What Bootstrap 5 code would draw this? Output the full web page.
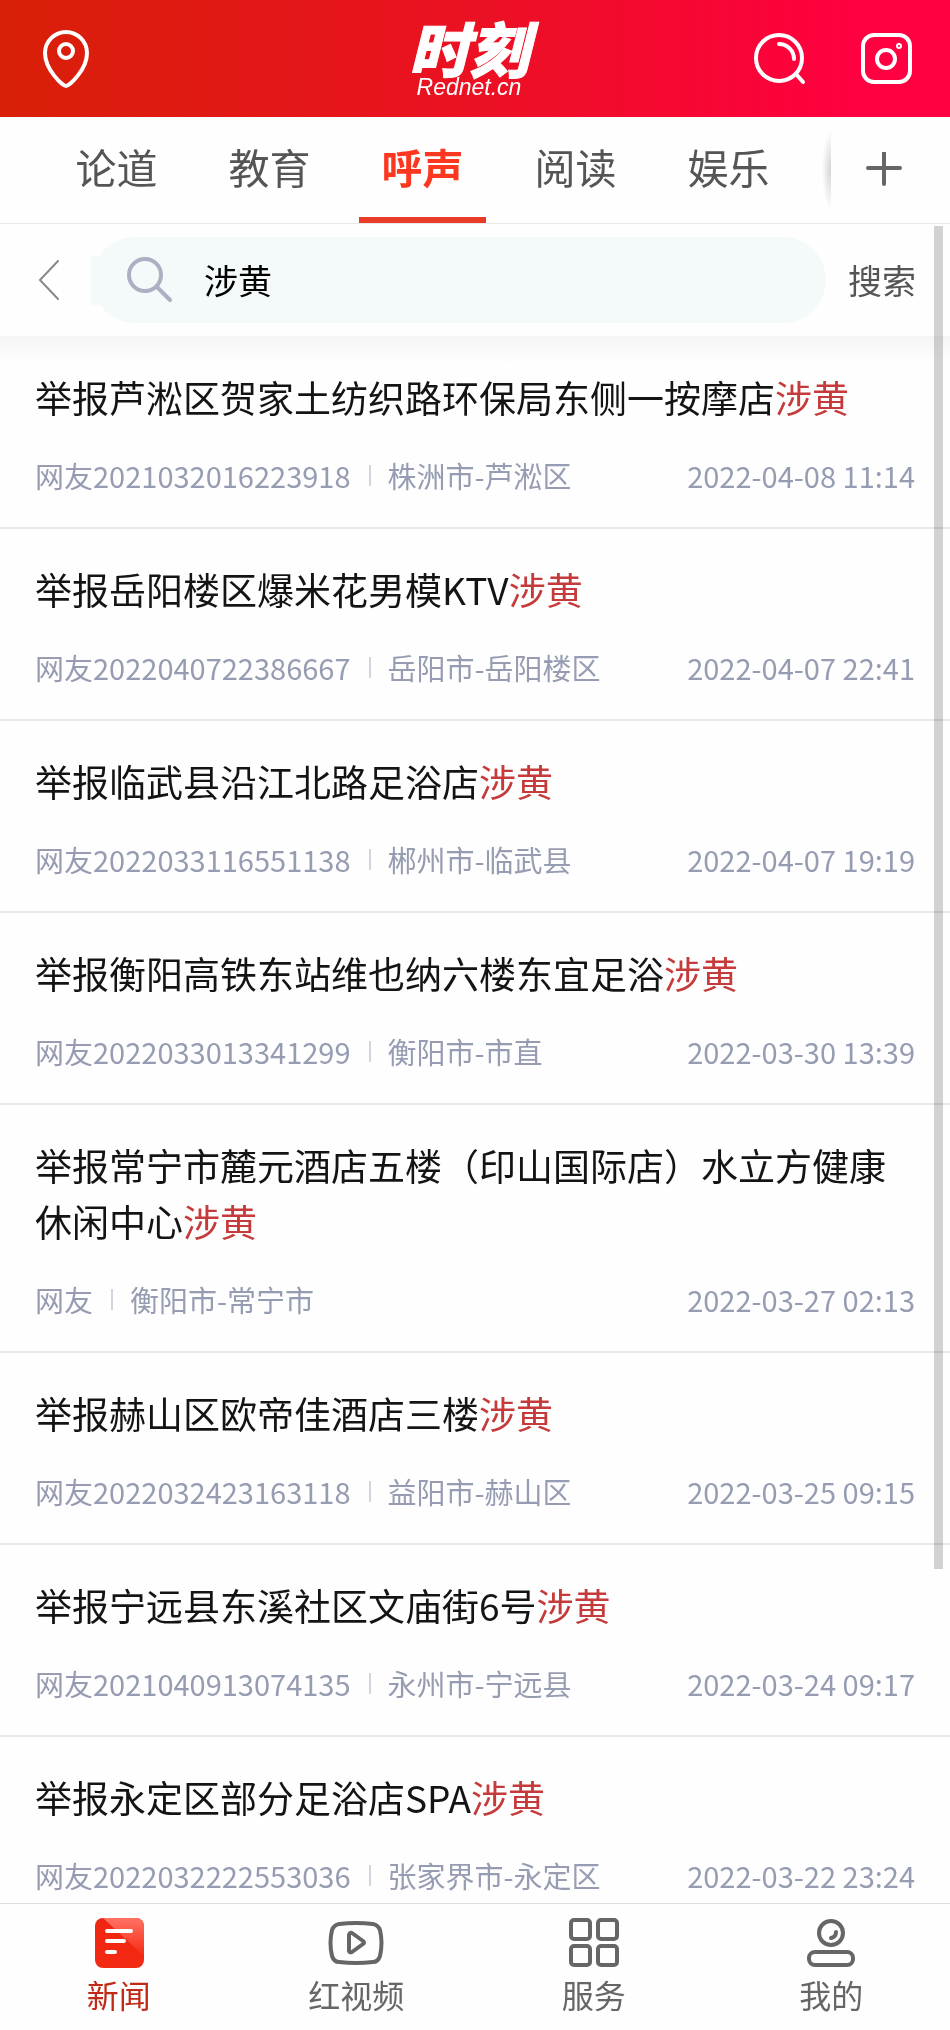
<!DOCTYPE html>
<html lang="zh-CN">
<head>
<meta charset="utf-8">
<meta name="viewport" content="width=device-width, initial-scale=1">
<title>时刻 - 呼声</title>
<link href="https://cdn.jsdelivr.net/npm/bootstrap@5.3.0/dist/css/bootstrap.min.css" rel="stylesheet">
<style>
  body { font-family: "Noto Sans CJK SC", sans-serif; background: #fefefe; color: #141414; }
  a { text-decoration: none; color: inherit; }
  button { background: none; border: 0; padding: 0; }
  svg { display: block; fill: none; stroke-linecap: round; stroke-linejoin: round; }

  .app-header { display: grid; grid-template-columns: 1fr auto 1fr; height: 117px; padding: 0 37px; background: linear-gradient(90deg, #d82008, #ec1024 52%, #ff0040 90%); color: #fff; }
  .app-header svg { stroke: #fff; stroke-width: 4; }
  .header-tools { gap: 52px; }
  .brand { margin-right: 12px; }
  .brand-name { font-size: 60px; line-height: 56px; font-weight: 900; font-style: italic; -webkit-text-stroke: 1px #fff; }
  .brand-site { font-family: "Liberation Sans", sans-serif; font-size: 23px; line-height: 24px; font-style: italic; }

  .channels { height: 107px; border-bottom: 1px solid #e9e9e9; }
  .channels nav { padding: 0 26px 0 40px; }
  .channel { flex: 1 1 0; margin: 0 13px; padding-top: 18px; font-size: 41px; line-height: 62px; text-align: center; white-space: nowrap; color: #555; border-bottom: 6px solid transparent; }
  .channel.active { color: #fb3720; font-weight: 700; border-color: #e83c28; }
  .channel-more { width: 119px; padding-right: 13px; position: relative; }
  .channel-more::before { content: ""; position: absolute; right: 100%; top: 12px; bottom: 12px; width: 10px; background: radial-gradient(ellipse 9px 40px at 100% 50%, #d4d4d4, transparent); }

  .search-row { height: 112px; padding: 0 34px 0 38px; }
  .search-pill { height: 86px; margin: 0 22px 0 33px; padding-left: 35px; background: #f4f9fa; position: relative; }
  .search-pill::before { content: ""; position: absolute; left: -1px; top: 19px; width: 12px; height: 49px; background: #f4f9fa; }
  .search-pill input { min-width: 0; font-size: 34px; line-height: 52px; margin-left: 31px; padding: 0; border: 0; outline: 0; background: transparent; color: #000; }
  .search-go { font-size: 34px; line-height: 52px; color: #555; }

  .results { min-height: 0; padding-top: 1px; }
  .results::before { content: ""; position: absolute; left: 0; right: 0; top: 0; height: 28px; background: linear-gradient(#f5f5f5, #fefefe00); }
  .result { padding: 32px 35px 30px; border-bottom: 2px solid #e8e8e8; }
  .result h2 { margin: 0 0 28px; font-size: 37px; line-height: 56px; font-weight: 400; }
  .result em { font-style: normal; color: #c53a3a; }
  .result-meta { font-size: 29px; line-height: 44px; color: #969db2; white-space: nowrap; }
  .bar-sep { width: 2px; height: 21px; margin: 0 17px 0 18px; background: #d3d5de; }
  .scroll-thumb { position: absolute; z-index: 2; right: 7px; top: 2px; width: 9px; height: 80%; background: #d3d3d3; mix-blend-mode: multiply; }

  .tabbar { height: 127px; border-top: 1px solid #dedede; background: #fefefe; position: relative; z-index: 3; }
  .tabbar a { flex: 1 1 0; padding-top: 12px; font-size: 32px; line-height: 48px; text-align: center; color: #666; }
  .tabbar a.active { color: #c02a17; }
  .tabbar svg { margin: 0 auto; stroke: #666; stroke-width: 4; }
</style>
</head>
<body>
<div class="d-flex flex-column vh-100 overflow-hidden">

  <header class="app-header align-items-center flex-shrink-0">
    <button type="button" aria-label="定位">
      <svg width="58" height="62" viewBox="0 0 58 62"><path d="M29 58C26 58 8 42 8 25a21 21 0 0 1 42 0C50 42 32 58 29 58Z"/><circle cx="29" cy="23" r="7"/></svg>
    </button>
    <a href="#" class="brand text-center">
      <div class="brand-name">时刻</div>
      <div class="brand-site">Rednet.cn</div>
    </a>
    <div class="header-tools d-flex justify-content-end">
      <button type="button" aria-label="搜索新闻">
        <svg width="56" height="56" viewBox="0 0 56 56"><circle cx="28" cy="27" r="23"/><path d="M28 13a15 15 0 0 1 15 15M45 43l7 8"/></svg>
      </button>
      <button type="button" aria-label="拍摄">
        <svg width="54" height="56" viewBox="0 0 54 56"><rect x="4" y="4" width="47" height="47" rx="11"/><circle cx="27" cy="28" r="9"/><circle cx="40" cy="15" r="1"/></svg>
      </button>
    </div>
  </header>

  <div class="channels d-flex flex-shrink-0">
    <nav class="d-flex flex-grow-1" aria-label="频道">
      <a class="channel" href="#">论道</a>
      <a class="channel" href="#">教育</a>
      <a class="channel active" href="#" aria-current="page">呼声</a>
      <a class="channel" href="#">阅读</a>
      <a class="channel" href="#">娱乐</a>
    </nav>
    <button type="button" class="channel-more d-flex align-items-center justify-content-center" aria-label="更多频道">
      <svg width="36" height="36" viewBox="0 0 36 36" stroke="#666" stroke-width="4"><path d="M2 16h32M18 0v32"/></svg>
    </button>
  </div>

  <main class="d-flex flex-column flex-grow-1 position-relative overflow-hidden">
    <form class="search-row d-flex align-items-center flex-shrink-0" role="search">
      <button type="button" aria-label="返回">
        <svg width="21" height="42" viewBox="0 0 21 42" stroke="#8a8a8a" stroke-width="2"><path d="M20 2 2 21l18 19"/></svg>
      </button>
      <div class="search-pill d-flex align-items-center flex-grow-1 rounded-pill">
        <svg width="46" height="46" viewBox="0 0 46 46" stroke="#adb0c2" stroke-width="4"><circle cx="18" cy="18" r="16"/><path d="m30 30 13 13"/></svg>
        <input type="text" class="flex-grow-1" value="涉黄" aria-label="搜索内容">
      </div>
      <button type="submit" class="search-go">搜索</button>
    </form>

    <ul class="results list-unstyled mb-0 flex-grow-1 position-relative overflow-hidden">
      <li class="result">
        <h2><a href="#">举报芦淞区贺家土纺织路环保局东侧一按摩店<em>涉黄</em></a></h2>
        <div class="result-meta d-flex align-items-center"><span>网友2021032016223918</span><i class="bar-sep"></i><span>株洲市-芦淞区</span><time class="ms-auto">2022-04-08 11:14</time></div>
      </li>
      <li class="result">
        <h2><a href="#">举报岳阳楼区爆米花男模KTV<em>涉黄</em></a></h2>
        <div class="result-meta d-flex align-items-center"><span>网友2022040722386667</span><i class="bar-sep"></i><span>岳阳市-岳阳楼区</span><time class="ms-auto">2022-04-07 22:41</time></div>
      </li>
      <li class="result">
        <h2><a href="#">举报临武县沿江北路足浴店<em>涉黄</em></a></h2>
        <div class="result-meta d-flex align-items-center"><span>网友2022033116551138</span><i class="bar-sep"></i><span>郴州市-临武县</span><time class="ms-auto">2022-04-07 19:19</time></div>
      </li>
      <li class="result">
        <h2><a href="#">举报衡阳高铁东站维也纳六楼东宜足浴<em>涉黄</em></a></h2>
        <div class="result-meta d-flex align-items-center"><span>网友2022033013341299</span><i class="bar-sep"></i><span>衡阳市-市直</span><time class="ms-auto">2022-03-30 13:39</time></div>
      </li>
      <li class="result">
        <h2><a href="#">举报常宁市麓元酒店五楼（印山国际店）水立方健康休闲中心<em>涉黄</em></a></h2>
        <div class="result-meta d-flex align-items-center"><span>网友</span><i class="bar-sep"></i><span>衡阳市-常宁市</span><time class="ms-auto">2022-03-27 02:13</time></div>
      </li>
      <li class="result">
        <h2><a href="#">举报赫山区欧帝佳酒店三楼<em>涉黄</em></a></h2>
        <div class="result-meta d-flex align-items-center"><span>网友2022032423163118</span><i class="bar-sep"></i><span>益阳市-赫山区</span><time class="ms-auto">2022-03-25 09:15</time></div>
      </li>
      <li class="result">
        <h2><a href="#">举报宁远县东溪社区文庙街6号<em>涉黄</em></a></h2>
        <div class="result-meta d-flex align-items-center"><span>网友2021040913074135</span><i class="bar-sep"></i><span>永州市-宁远县</span><time class="ms-auto">2022-03-24 09:17</time></div>
      </li>
      <li class="result">
        <h2><a href="#">举报永定区部分足浴店SPA<em>涉黄</em></a></h2>
        <div class="result-meta d-flex align-items-center"><span>网友2022032222553036</span><i class="bar-sep"></i><span>张家界市-永定区</span><time class="ms-auto">2022-03-22 23:24</time></div>
      </li>
    </ul>
    <div class="scroll-thumb"></div>
  </main>

  <nav class="tabbar d-flex flex-shrink-0" aria-label="主导航">
    <a class="active" href="#" aria-current="page">
      <svg width="60" height="54" viewBox="0 0 60 54">
        <defs>
          <linearGradient id="newsBase" x1="0" y1="0" x2="0" y2="1"><stop offset="0" stop-color="#ee2512"/><stop offset="1" stop-color="#f52a14"/></linearGradient>
          <linearGradient id="newsShine" x1="0" y1="0" x2="0" y2="1"><stop offset="0" stop-color="#ff7263"/><stop offset="1" stop-color="#f52a14"/></linearGradient>
        </defs>
        <rect x="6" y="2" width="49" height="50" rx="8" fill="url(#newsBase)" stroke="none"/>
        <path d="M14 2h33a8 8 0 0 1 8 8v30Z" fill="url(#newsShine)" stroke="none"/>
        <path d="M18 15h24M18 25h17M18 36h8" stroke="#fff"/>
      </svg>新闻</a>
    <a href="#">
      <svg width="60" height="54" viewBox="0 0 60 54"><path d="M13 8Q30 6 47 8 52 9 54 14 57 27 54 40 52 46 47 46 30 48 13 46 8 46 6 40 3 27 6 14 8 9 13 8Z"/><path d="M23 19v16q1 2 3 1l11-8q2-1 0-3l-11-8q-2-1-3 2Z"/></svg>红视频</a>
    <a href="#">
      <svg width="60" height="54" viewBox="0 0 60 54"><rect x="7" y="4" width="19" height="19" rx="3"/><rect x="34" y="4" width="19" height="19" rx="3"/><rect x="7" y="30" width="19" height="19" rx="3"/><rect x="34" y="30" width="19" height="19" rx="3"/></svg>服务</a>
    <a href="#">
      <svg width="60" height="54" viewBox="0 0 60 54"><circle cx="30" cy="17" r="12"/><path d="M35 16q0 5-5 6"/><rect x="8" y="36" width="44" height="13" rx="6"/></svg>我的</a>
  </nav>
</div>
<script src="https://cdn.jsdelivr.net/npm/bootstrap@5.3.0/dist/js/bootstrap.bundle.min.js"></script>
</body>
</html>
